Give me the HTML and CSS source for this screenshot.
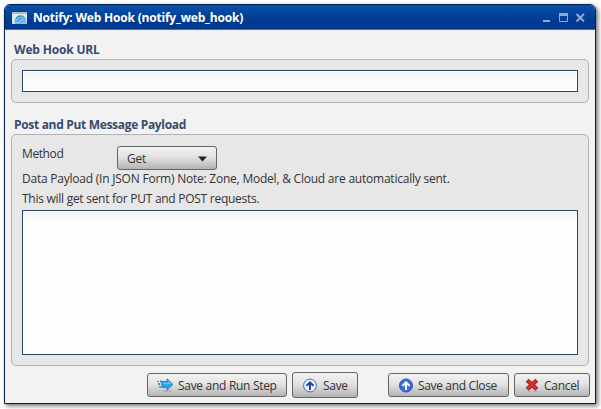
FILE: index.html
```html
<!DOCTYPE html>
<html lang="en">
<head>
<meta charset="utf-8">
<title>Notify: Web Hook</title>
<link rel="stylesheet" href="styles.css">
</head>
<body>
<main class="window">
  <header class="titlebar">
    <svg class="app-icon" width="15" height="12" viewBox="0 0 15 12">
      <defs><linearGradient id="globe" x2="0" y2="1"><stop stop-color="#2d83c4"/><stop offset="1" stop-color="#79cdf4"/></linearGradient></defs>
      <rect width="15" height="12" rx="1" fill="#dceaf5"/>
      <path d="M0 1h15" stroke="#b9b9b6" stroke-width="2"/>
      <path d="M2.500 12C2.500 6 5 3.300 8.500 3.300S14.500 6 14.500 12z" fill="url(#globe)"/>
      <path d="M4.500 8c2-3 5-3.500 8-2M8 9l2-2 3 1" fill="none" stroke="#b7e3f8" stroke-width=".7"/>
    </svg>
    <h1 class="title">Notify: Web Hook (notify_web_hook)</h1>
    <svg class="controls" width="43" height="11" viewBox="0 0 43 11">
      <path d="M0 9h7" stroke="#8caad8" stroke-width="2"/>
      <path d="M16.500 1v8.500h8V1" fill="none" stroke="#8caad8"/>
      <path d="M16 2.500h9" stroke="#8caad8" stroke-width="3"/>
      <path d="M33.500 2l7.500 7.500M41 2l-7.500 7.500" stroke="#8caad8" stroke-width="2"/>
    </svg>
  </header>
  <section class="content">
    <h2 class="heading url-heading">Web Hook URL</h2>
    <div class="panel url-panel"><input class="field" type="text" aria-label="Web Hook URL"></div>
    <h2 class="heading payload-heading">Post and Put Message Payload</h2>
    <div class="panel payload-panel">
      <div class="method-row">
        <span class="method-label">Method</span>
        <div class="select"><span>Get</span><svg width="9" height="6" viewBox="0 0 9 6"><path d="M0 0.500h9L4.500 5.500z" fill="#222"/></svg></div>
      </div>
      <p class="note note-one">Data Payload (In JSON Form) Note: Zone, Model, &amp; Cloud are automatically sent.</p>
      <p class="note note-two">This will get sent for PUT and POST requests.</p>
      <textarea class="field area" aria-label="Data Payload"></textarea>
    </div>
    <footer class="actions">
      <button class="button run">
        <svg width="17" height="14" viewBox="0 0 17 14">
          <ellipse cx="10" cy="13" rx="5" ry=".8" fill="#aaa"/>
          <path d="M5 3.500h5V.8l6 5.700-6 5.700V9.500H5z" fill="#2fa2e8" stroke="#2379b8" stroke-width=".8"/>
          <path d="M6 5h5V3l3.500 3H6z" fill="#65c4f7"/>
          <path d="M0 3h2v1H0zM3 2.500h2v2H3zM1 5h2v2H1zM4 5h2v2H4zM2 8h3v1.500H2z" fill="#3b91c9"/>
        </svg><span>Save and Run Step</span>
      </button>
      <button class="button save">
        <svg width="14" height="15" viewBox="0 0 14 15"><circle cx="7" cy="7.500" r="6.400" fill="#f2f6ff" stroke="#3f65cc"/><path d="M7 12V5M3.500 7.800L7 4.300l3.500 3.500" fill="none" stroke="#1f45ae" stroke-width="2"/></svg><span>Save</span>
      </button>
      <button class="button close">
        <svg width="14" height="15" viewBox="0 0 14 15"><circle cx="7" cy="7.500" r="6.500" fill="#416ad8" stroke="#2b4db5"/><path d="M7 12V5M3.500 7.800L7 4.300l3.500 3.500" fill="none" stroke="#fff" stroke-width="2"/></svg><span>Save and Close</span>
      </button>
      <button class="button cancel">
        <svg width="14" height="14" viewBox="0 0 14 14"><path d="M3 13.500h3M9 13.500h3" stroke="#aaa"/><path d="M2.200 2.200l9.600 9M11.800 2.200l-9.600 9" stroke="#8f1c1c" stroke-width="4.200"/><path d="M2.500 2.500l9 8.400M11.500 2.500l-9 8.400" stroke="#db2b2b" stroke-width="2.800"/></svg><span>Cancel</span>
      </button>
    </footer>
  </section>
</main>
</body>
</html>
```
FILE: styles.css
```css
* { box-sizing: border-box; }
body {
  margin: 0;
  padding: 4px;
  height: 409px;
  overflow: hidden;
  background: #fdfdfd;
  color: #333;
  font: 12px/16px "Open Sans", "Noto Sans", sans-serif;
  letter-spacing: -.25px;
}
h1, h2, p { margin: 0; font-size: 12px; white-space: nowrap; }
p { font-weight: 400; }
svg { display: block; flex: none; }
.window {
  width: 592px;
  height: 400px;
  border: 1px solid #02214f;
  border-radius: 6px 6px 0 0;
  background: #f2f2f2;
  box-shadow: 2px 2px 4px rgba(0, 0, 0, .55);
}
.titlebar {
  display: flex;
  align-items: center;
  height: 25px;
  padding: 1px 9px 0 7px;
  border-bottom: 1px solid #596c8c;
  border-radius: 5px 5px 0 0;
  background: linear-gradient(#0750a9, #003a91 70%, #00388e);
}
.title { margin-left: 6px; color: #fff; line-height: 16px; letter-spacing: -.2px; }
.controls { margin-left: auto; }
.content { padding: 0 6px; }
.heading { height: 16px; padding-left: 3px; color: #364b6e; line-height: 16px; }
.url-heading { margin-top: 12px; letter-spacing: -.17px; }
.payload-heading { margin-top: 14px; letter-spacing: -.32px; }
.panel {
  border: 1px solid #b2b2b2;
  border-radius: 5px;
  background: #e7e7e7;
  padding: 10px;
}
.url-panel { height: 44px; margin-top: 1px; }
.payload-panel { height: 232px; margin-top: 1px; }
.field {
  display: block;
  width: 556px;
  height: 22px;
  margin: 0;
  border: 1px solid #2c426a;
  border-radius: 0;
  outline: none;
  background: linear-gradient(#f3f3f3, #fdfdfd 12px);
  box-shadow: inset 0 0 0 1px #fff;
}
.area { height: 145px; resize: none; }
.method-row { display: flex; height: 25px; }
.method-label { width: 95px; padding-top: 1px; letter-spacing: -.4px; }
.select {
  display: flex;
  align-items: center;
  justify-content: space-between;
  width: 100px;
  height: 24px;
  margin-top: 1px;
  padding: 1px 9px 0;
}
.select, .button {
  border: 1px solid #666;
  border-radius: 3px;
  background: linear-gradient(#f2f2f2, #e3e3e3 45%, #b3b3b3);
}
.note { height: 20px; line-height: 16px; }
.note-one { margin-top: 1px; letter-spacing: -.225px; }
.note-two { height: 19px; letter-spacing: -.27px; }
.actions { display: flex; align-items: center; height: 26px; margin-top: 6px; }
.button {
  display: flex;
  flex: none;
  align-items: center;
  height: 24px;
  padding: 0 0 0 10px;
  color: #333;
  font: inherit;
  letter-spacing: -.3px;
  white-space: nowrap;
}
.button span { margin-left: 6px; padding-top: 1px; }
.run { width: 140px; margin-left: 136px; padding-left: 9px; }
.run span { margin-left: 4px; }
.save { width: 66px; height: 26px; margin-left: 5px; }
.close { width: 121px; margin-left: 30px; }
.close span { margin-left: 5px; letter-spacing: -.35px; }
.cancel { width: 76px; margin-left: 5px; }
.cancel span { margin-left: 5px; }
```
